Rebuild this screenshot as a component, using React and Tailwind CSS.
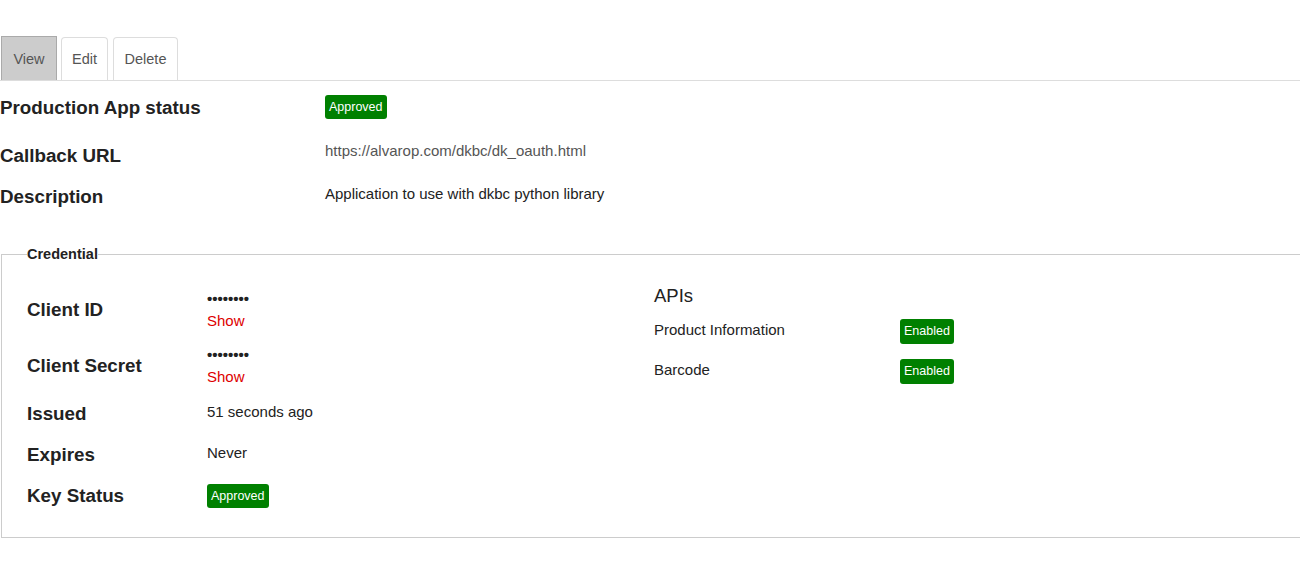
const font = { fontFamily: '"Liberation Sans", Arial, sans-serif' };

function Badge({ children, className = '' }) {
  return (
    <span
      className={`inline-flex items-center rounded-[3px] bg-[#008000] px-[4px] text-[12.5px] text-white ${className}`}
    >
      {children}
    </span>
  );
}

function Tab({ active, width, children }) {
  return (
    <div
      className={
        active
          ? `flex h-[44px] items-center justify-center border border-b-0 border-[#aaa] bg-[#cccccc] pt-[2px] text-[14.5px] text-[#555] ${width}`
          : `flex h-[43px] items-center justify-center rounded-t-[4px] border border-b-0 border-[#ddd] bg-white pt-[1px] text-[14.5px] text-[#555] ${width}`
      }
    >
      {children}
    </div>
  );
}

export default function App() {
  return (
    <div className="min-h-[581px] w-full overflow-hidden bg-white text-[#222]" style={font}>
      <div className="pt-[36px]">
        <div className="flex items-end border-b border-[#ddd] pl-px">
          <Tab active width="w-[56px]">View</Tab>
          <div className="ml-[4px]">
            <Tab width="w-[47px]">Edit</Tab>
          </div>
          <div className="ml-[5px]">
            <Tab width="w-[65px]">Delete</Tab>
          </div>
        </div>

        <div className="pt-[15px]">
          <div className="flex h-[48px] items-start">
            <div className="w-[325px] text-[18.8px] leading-[24px] font-bold">Production App status</div>
            <Badge className="-mt-px h-[24px]">Approved</Badge>
          </div>
          <div className="flex h-[41px] items-start">
            <div className="w-[325px] text-[18.8px] leading-[24px] font-bold">Callback URL</div>
            <div className="-mt-px text-[15px] leading-[16px] text-[#555]">https://alvarop.com/dkbc/dk_oauth.html</div>
          </div>
          <div className="flex h-[24px] items-start">
            <div className="w-[325px] text-[18.8px] leading-[24px] font-bold">Description</div>
            <div className="text-[15px] leading-[18px]">Application to use with dkbc python library</div>
          </div>
        </div>

        <fieldset className="mt-[36px] ml-px w-[1340px] border border-[#ccc] pt-px pl-[25px] pb-[29px]">
          <legend className="px-0 text-[14.5px] leading-[18px] font-bold">Credential</legend>
          <div className="flex">
            <div className="w-[627px] pt-[24px]">
              <div className="flex h-[44px] items-center">
                <div className="w-[180px] text-[18.8px] leading-[24px] font-bold">Client ID</div>
                <div className="flex flex-col">
                  <span className="text-[15px] leading-[22px] font-bold">••••••••</span>
                  <span className="text-[15px] leading-[22px] text-[#dd0000]">Show</span>
                </div>
              </div>
              <div className="mt-[12px] flex h-[44px] items-center">
                <div className="w-[180px] text-[18.8px] leading-[24px] font-bold">Client Secret</div>
                <div className="flex flex-col">
                  <span className="text-[15px] leading-[22px] font-bold">••••••••</span>
                  <span className="text-[15px] leading-[22px] text-[#dd0000]">Show</span>
                </div>
              </div>
              <div className="mt-[14px] flex h-[41px] items-start">
                <div className="w-[180px] text-[18.8px] leading-[24px] font-bold">Issued</div>
                <div className="text-[15px] leading-[20px]">51 seconds ago</div>
              </div>
              <div className="flex h-[41px] items-start">
                <div className="w-[180px] text-[18.8px] leading-[24px] font-bold">Expires</div>
                <div className="text-[15px] leading-[20px]">Never</div>
              </div>
              <div className="flex h-[24px] items-start">
                <div className="w-[180px] text-[18.8px] leading-[24px] font-bold">Key Status</div>
                <Badge className="h-[24px]">Approved</Badge>
              </div>
            </div>

            <div className="pt-[20px]">
              <div className="mb-[11px] text-[18.5px] leading-[24px]">APIs</div>
              <div className="flex h-[40px] items-start">
                <div className="w-[246px] text-[15px] leading-[22px]">Product Information</div>
                <Badge className="h-[25px]">Enabled</Badge>
              </div>
              <div className="flex h-[25px] items-start">
                <div className="w-[246px] text-[15px] leading-[22px]">Barcode</div>
                <Badge className="h-[25px]">Enabled</Badge>
              </div>
            </div>
          </div>
        </fieldset>
      </div>
    </div>
  );
}
